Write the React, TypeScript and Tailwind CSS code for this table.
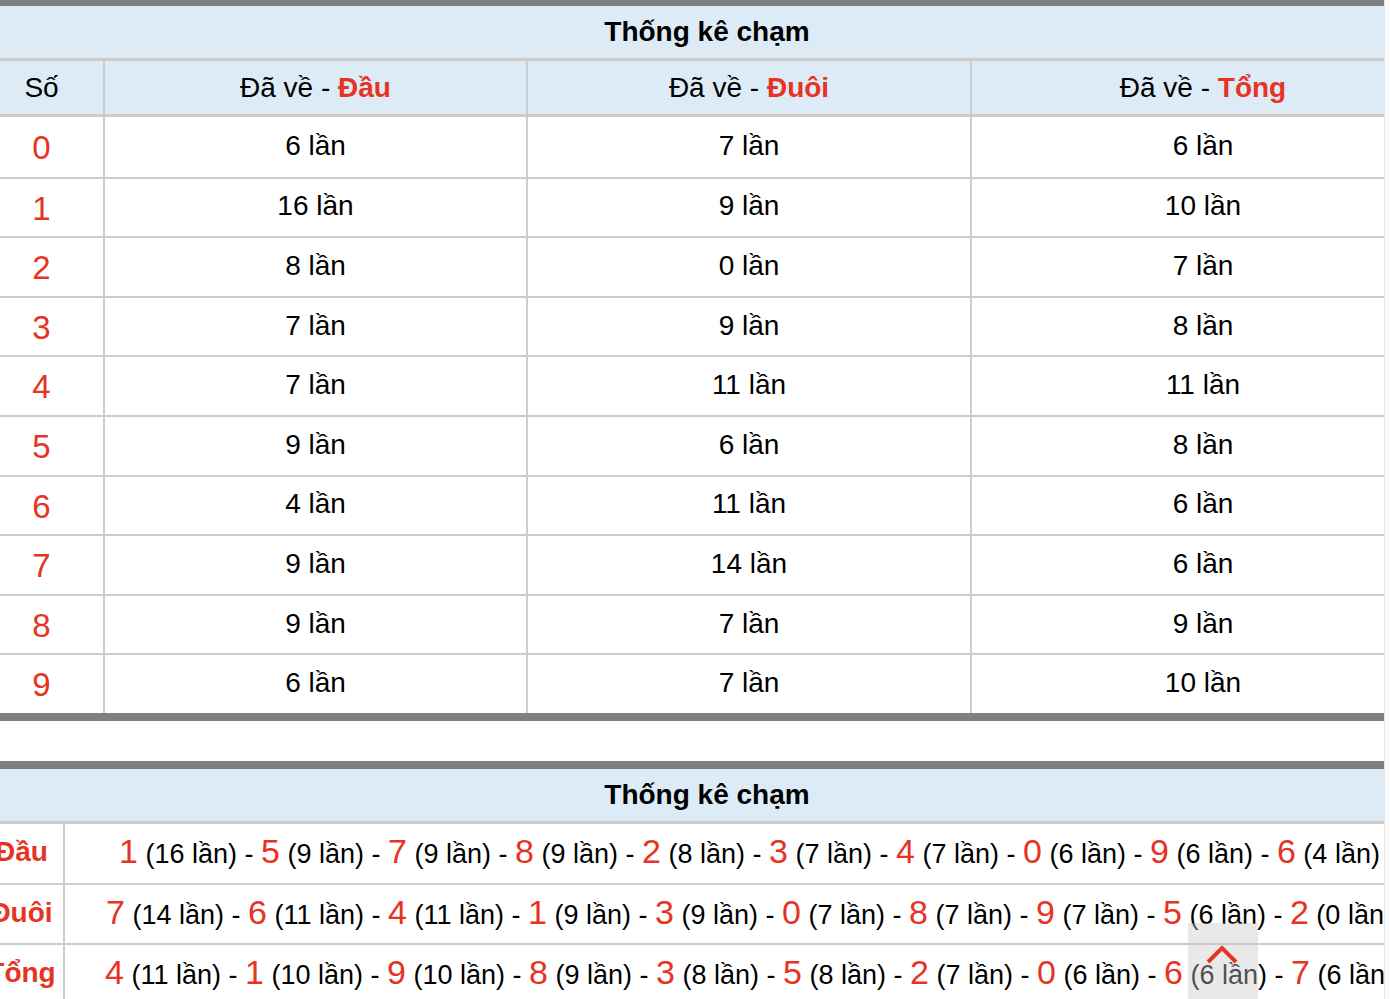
const rows: [number, number, number, number][] = [
  [0, 6, 7, 6],
  [1, 16, 9, 10],
  [2, 8, 0, 7],
  [3, 7, 9, 8],
  [4, 7, 11, 11],
  [5, 9, 6, 8],
  [6, 4, 11, 6],
  [7, 9, 14, 6],
  [8, 9, 7, 9],
  [9, 6, 7, 10],
];

const summary: { label: string; items: [number, number][] }[] = [
  {
    label: 'Đầu',
    items: [[1, 16], [5, 9], [7, 9], [8, 9], [2, 8], [3, 7], [4, 7], [0, 6], [9, 6], [6, 4]],
  },
  {
    label: 'Đuôi',
    items: [[7, 14], [6, 11], [4, 11], [1, 9], [3, 9], [0, 7], [8, 7], [9, 7], [5, 6], [2, 0]],
  },
  {
    label: 'Tổng',
    items: [[4, 11], [1, 10], [9, 10], [8, 9], [3, 8], [5, 8], [2, 7], [0, 6], [6, 6], [7, 6]],
  },
];

function Title() {
  return (
    <div className="flex h-[52px] items-center justify-center bg-[#ddebf6] text-[28px] font-bold text-black">
      Thống kê chạm
    </div>
  );
}

export default function App() {
  return (
    <div className="relative flex h-[999px] w-full overflow-hidden bg-white font-['Liberation_Sans',Arial,sans-serif] text-black">
      <div className="w-[1384px] overflow-hidden">
        <div className="-ml-[20px] w-[1454px]">
          {/* bảng 1 */}
          <div className="border-t-[6px] border-b-[8px] border-[#808080]">
            <Title />
            <div className="grid h-[59px] grid-cols-[123px_423px_444px_464px] border-y-[3px] border-[#cccccc] bg-[#ddebf6] text-[28px]">
              <div className="flex items-center justify-center">Số</div>
              <div className="flex items-center justify-center border-l-2 border-[#cccccc]">
                Đã về -&nbsp;<b className="text-[#e63323]">Đầu</b>
              </div>
              <div className="flex items-center justify-center border-l-2 border-[#cccccc]">
                Đã về -&nbsp;<b className="text-[#e63323]">Đuôi</b>
              </div>
              <div className="flex items-center justify-center border-l-2 border-[#cccccc]">
                Đã về -&nbsp;<b className="text-[#e63323]">Tổng</b>
              </div>
            </div>
            {rows.map(([n, a, b, c], i) => (
              <div
                key={n}
                className={`grid h-[59.6px] grid-cols-[123px_423px_444px_464px] text-[28px] ${i > 0 ? 'border-t-2 border-[#cccccc]' : ''}`}
              >
                <div className="flex items-center justify-center pt-[2px] text-[33px] text-[#e63323]">{n}</div>
                <div className="flex items-center justify-center border-l-2 border-[#cccccc] pb-[2px]">{a} lần</div>
                <div className="flex items-center justify-center border-l-2 border-[#cccccc] pb-[2px]">{b} lần</div>
                <div className="flex items-center justify-center border-l-2 border-[#cccccc] pb-[2px]">{c} lần</div>
              </div>
            ))}
          </div>

          <div className="h-[40px]" />

          {/* bảng 2 */}
          <div className="border-t-[8px] border-[#808080]">
            <Title />
            {summary.map((r, i) => (
              <div
                key={r.label}
                className={`grid grid-cols-[83px_1371px] border-[#cccccc] ${i === 0 ? 'h-[62px] border-t-[3px]' : 'h-[60px] border-t-2'}`}
              >
                <div className="flex items-center justify-center pb-[2px] text-[28px] font-bold text-[#e63323]">{r.label}</div>
                <div className="flex items-center overflow-hidden border-l-2 border-[#cccccc] px-[38px]">
                  <div className="w-full whitespace-nowrap pb-[4px] text-center text-[27px] leading-none">
                    {r.items.map(([d, t], k) => (
                      <span key={k}>
                        {k > 0 && ' - '}
                        <span className="text-[34px] text-[#e63323]">{d}</span> ({t} lần)
                      </span>
                    ))}
                  </div>
                </div>
              </div>
            ))}
          </div>
        </div>
      </div>
      <div className="w-[6px] border-l border-[#e3e3e3] bg-[#fafafa]" />

      <button className="absolute left-[1188px] top-[923px] h-[80px] w-[70px] bg-[rgba(200,200,200,0.4)]">
        <svg className="absolute left-[17px] top-[21px]" width="36" height="20" viewBox="0 0 36 20">
          <polyline points="3,18 17,4 31,18" fill="none" stroke="#e63323" strokeWidth="4" />
        </svg>
      </button>
    </div>
  );
}
